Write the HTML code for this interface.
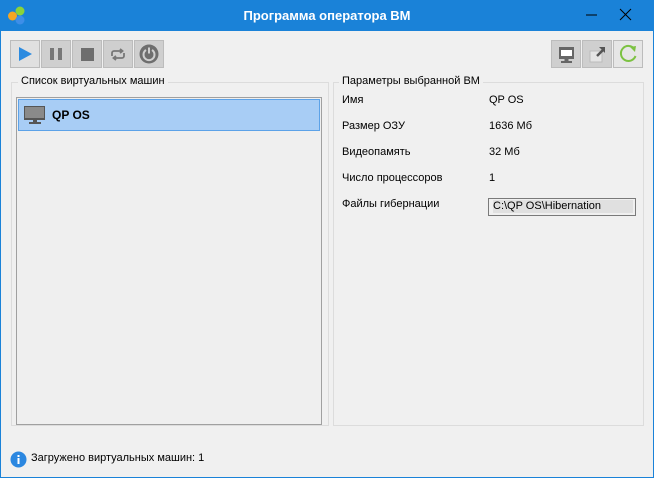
<!DOCTYPE html>
<html><head><meta charset="utf-8"><style>
*{margin:0;padding:0;box-sizing:border-box}
body{width:654px;height:478px;overflow:hidden;background:#1a82d8;font-family:"Liberation Sans","DejaVu Sans",sans-serif;font-size:11px;color:#000;position:relative}
.abs{position:absolute}
.body{left:1px;top:31px;width:652px;height:446px;background:#f0f0f0}
.title{left:0;top:0;width:654px;height:31px;color:#fff;font-weight:bold;font-size:13px;text-align:center;line-height:31px}
.btn{position:absolute;top:40px;width:30px;height:28px;background:#cfcfcf;border:1px solid #bcbcbc}
.grp{border:1px solid #dcdcdc}
.lbl{position:absolute;background:#f0f0f0;padding:0 3px}
</style></head><body>
<div class="abs title">Программа оператора ВМ</div>
<svg class="abs" style="left:4px;top:4px" width="24" height="24"><circle cx="16" cy="7" r="4.5" fill="#8ad33a"/><circle cx="8.5" cy="12" r="4.5" fill="#f5a623"/><circle cx="16" cy="16" r="4.5" fill="#3d8ee8"/></svg>
<svg class="abs" style="left:584px;top:6px" width="60" height="18"><path d="M2 9h11" stroke="#000" stroke-width="1"/><path d="M36 3l11 11M47 3L36 14" stroke="#000" stroke-width="1"/></svg>
<div class="abs body"></div>
<div class="btn" style="left:10px;background:#e0e0e0"><svg width="28" height="26"><path d="M8 6v14l13-7z" fill="#2c8be0"/></svg></div>
<div class="btn" style="left:41px"><svg width="28" height="26"><rect x="8" y="7" width="4" height="12" fill="#777"/><rect x="16" y="7" width="4" height="12" fill="#777"/></svg></div>
<div class="btn" style="left:72px"><svg width="28" height="26"><rect x="8" y="7" width="13" height="13" fill="#6e6e6e"/></svg></div>
<div class="btn" style="left:103px"><svg width="28" height="26"><path d="M8 15v-3a2 2 0 0 1 2-2h8M16 8l2.5 2-2.5 2M20 12v3a2 2 0 0 1-2 2h-8M12 19l-2.5-2 2.5-2" fill="none" stroke="#777" stroke-width="1.8"/></svg></div>
<div class="btn" style="left:134px"><svg width="28" height="26"><circle cx="14" cy="13" r="9.5" fill="#6e6e6e"/><path d="M11 9a5.5 5.5 0 1 0 6 0M14 6.5v6" fill="none" stroke="#cfcfcf" stroke-width="2"/></svg></div>
<div class="btn" style="left:551px"><svg width="28" height="26"><rect x="7" y="6" width="15" height="12" fill="#666"/><rect x="9" y="9" width="11" height="6" fill="#fff"/><rect x="12.5" y="18" width="4" height="2" fill="#666"/><rect x="9" y="20" width="11" height="2" fill="#666"/></svg></div>
<div class="btn" style="left:582px"><svg width="28" height="26"><rect x="7" y="10" width="12" height="11" fill="#e4e4e4" stroke="#bbb"/><path d="M14 15l6-6" stroke="#555" stroke-width="2.5"/><path d="M16 6h6v6z" fill="#555"/></svg></div>
<div class="btn" style="left:613px;background:#e6e6e6"><svg width="28" height="26"><path d="M20.5 8a7.5 7.5 0 1 0 1 7" fill="none" stroke="#7cc242" stroke-width="2"/><path d="M16 6l6-1-1 6z" fill="#7cc242"/></svg></div>
<div class="abs grp" style="left:11px;top:82px;width:318px;height:344px"></div>
<div class="lbl" style="left:18px;top:75px">Список виртуальных машин</div>
<div class="abs" style="left:16px;top:97px;width:306px;height:328px;border:1px solid #a0a0a0;background:#efefef"></div>
<div class="abs" style="left:18px;top:99px;width:302px;height:32px;background:#a8cdf5;border:1px solid #5ca2e8"></div>
<svg class="abs" style="left:23px;top:105px" width="24" height="20"><rect x="1" y="1" width="21" height="14" fill="#555"/><rect x="2" y="2" width="19" height="11" fill="#8a8a8a"/><rect x="10" y="15" width="4" height="2" fill="#555"/><rect x="6" y="17" width="12" height="2" fill="#555"/></svg>
<div class="abs" style="left:52px;top:108px;font-weight:bold;font-size:12px">QP OS</div>
<div class="abs grp" style="left:333px;top:82px;width:311px;height:344px"></div>
<div class="lbl" style="left:339px;top:75px">Параметры выбранной ВМ</div>
<div class="abs" style="left:342px;top:94px">Имя</div><div class="abs" style="left:489px;top:94px">QP OS</div>
<div class="abs" style="left:342px;top:120px">Размер ОЗУ</div><div class="abs" style="left:489px;top:120px">1636 Мб</div>
<div class="abs" style="left:342px;top:146px">Видеопамять</div><div class="abs" style="left:489px;top:146px">32 Мб</div>
<div class="abs" style="left:342px;top:172px">Число процессоров</div><div class="abs" style="left:489px;top:172px">1</div>
<div class="abs" style="left:342px;top:198px">Файлы гибернации</div>
<div class="abs" style="left:488px;top:198px;width:148px;height:18px;border:1px solid #7a7a7a;background:#f0f0f0;padding:1px 2px 0 4px"><div style="background:#e0e0e0;height:13px;line-height:13px">C:\QP OS\Hibernation</div></div>
<svg class="abs" style="left:10px;top:451px" width="17" height="17"><circle cx="8.5" cy="8.5" r="8" fill="#2b87e0"/><rect x="7.5" y="7" width="2" height="6" fill="#fff"/><rect x="7.5" y="4" width="2" height="2" fill="#fff"/></svg>
<div class="abs" style="left:31px;top:452px">Загружено виртуальных машин: 1</div>
</body></html>
